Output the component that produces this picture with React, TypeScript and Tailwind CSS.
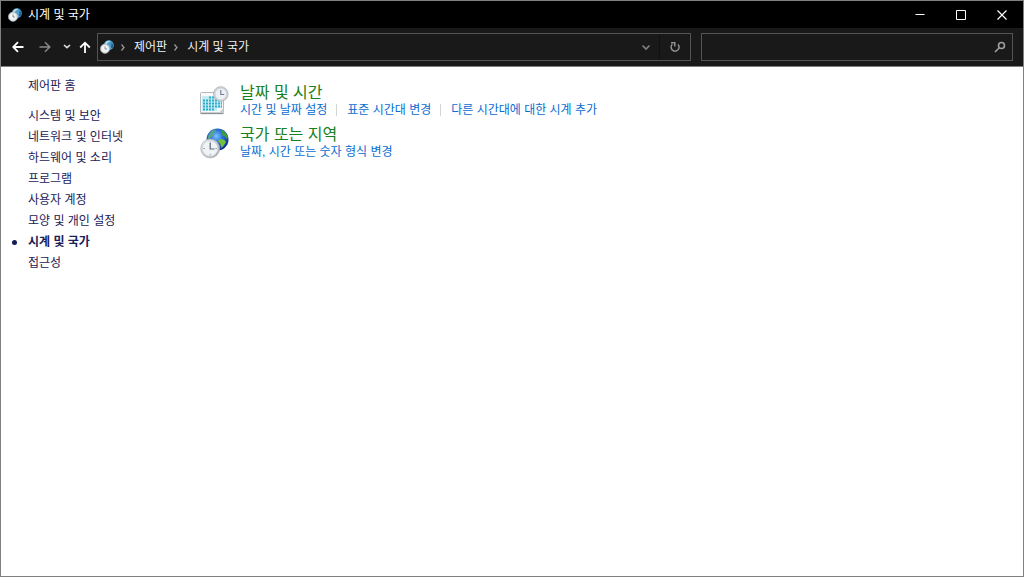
import React from 'react';

const categories = [
  '시스템 및 보안',
  '네트워크 및 인터넷',
  '하드웨어 및 소리',
  '프로그램',
  '사용자 계정',
  '모양 및 개인 설정',
  '시계 및 국가',
  '접근성',
];
const current = '시계 및 국가';

function ClockGlobeIcon({ id, className }: { id: string; className: string }) {
  return (
    <svg viewBox="0 0 30 31" className={className} aria-hidden="true">
      <defs>
        <radialGradient id={`${id}-sea`} cx="0.45" cy="0.35" r="0.7">
          <stop offset="0" stopColor="#7cc6fa" />
          <stop offset="0.45" stopColor="#2468d8" />
          <stop offset="1" stopColor="#0a2080" />
        </radialGradient>
        <linearGradient id={`${id}-rim`} x1="0" y1="0" x2="1" y2="1">
          <stop offset="0" stopColor="#eceef0" />
          <stop offset="1" stopColor="#a5aaaf" />
        </linearGradient>
      </defs>
      <circle cx="17.500" cy="11.500" r="11" fill={`url(#${id}-sea)`} />
      <path d="M8 8C9.500 4 12 2 15 1.200L16 3L13.500 5L13 8L10.500 9.500L9.500 12L7.500 12Z" fill="#5fae7c" opacity="0.8" />
      <path d="M20 1.500C24 2.500 27 5.500 28 9.500L26.500 11L25 8.500L22.500 7.500L22 4.500Z" fill="#3f9f3a" />
      <path d="M19.500 11L24 11.500L26 14L23.500 18L21 20L20.500 16L18 13.500Z" fill="#74c03a" />
      <circle cx="10.200" cy="20.500" r="9.500" fill={`url(#${id}-rim)`} stroke="#a9aeb3" strokeWidth="0.6" />
      <circle cx="10.200" cy="20.500" r="7.700" fill="#f1f4f7" stroke="#cdd2d6" strokeWidth="0.6" />
      <path d="M10.200 13.700v1.600M10.200 25.700v1.600M3.400 20.500h1.600M15.400 20.500h1.600" stroke="#9199a2" strokeWidth="0.9" />
      <path d="M10.200 15V21H14.500" fill="none" stroke="#59677a" strokeWidth="1.200" />
    </svg>
  );
}

function SmallClockIcon() {
  return (
    <svg viewBox="0 0 14 14" className="size-3.5 shrink-0" aria-hidden="true">
      <circle cx="8.800" cy="5.200" r="5" fill="#4e9dca" />
      <path d="M5 3C6.500 1 8.500 .5 10.500 1L8 2.500L6 5Z" fill="#b9e0ee" />
      <path d="M11.500 2.500C13.500 4 13.800 6.500 12.500 8.200L11 8Z" fill="#23618f" />
      <circle cx="5" cy="8.800" r="4.700" fill="#dce0e2" stroke="#a9b0b5" strokeWidth="0.5" />
      <circle cx="5" cy="8.800" r="3.200" fill="#f1f3f4" />
      <path d="M5 6.500V9H7" fill="none" stroke="#7d8790" strokeWidth="0.9" />
    </svg>
  );
}

function CalendarClockIcon() {
  return (
    <svg viewBox="0 0 30 30" className="h-[30px] w-[30px] shrink-0" aria-hidden="true">
      <rect x="0.500" y="6.500" width="23" height="20.500" rx="1" fill="#f7f9fa" stroke="#b3b9be" />
      <path d="M0.500 27.500H23.500" stroke="#8c9196" strokeWidth="1.300" />
      <path d="M2 10H22V22H17V25H2Z" fill="#c4eaf2" />
      <path
        d="M9 11.500H22M3 14.500H22M3 17.500H22M3 20.500H22M3 23.500H14"
        stroke="#2fabcb"
        strokeWidth="2"
        strokeDasharray="2 1"
      />
      <path d="M18.500 27L23.500 22V27Z" fill="#c8cdd1" />
      <circle cx="20.800" cy="8" r="7.300" fill="#d3d6d9" stroke="#a4a9ae" strokeWidth="0.7" />
      <circle cx="20.800" cy="8" r="5.700" fill="#eef2f6" stroke="#c2c8ce" strokeWidth="0.5" />
      <path d="M20.800 4V8.500H24.300" fill="none" stroke="#6c7b91" strokeWidth="1.100" />
    </svg>
  );
}

function Glyph({ d, className, width = 1.5 }: { d: string; className: string; width?: number }) {
  return (
    <svg viewBox="0 0 12 12" className={`size-3 shrink-0 ${className}`} fill="none" stroke="currentColor" strokeWidth={width} aria-hidden="true">
      <path d={d} />
    </svg>
  );
}

function TaskGroup({ icon, title, links }: { icon: React.ReactNode; title: string; links: string[] }) {
  return (
    <section className="flex items-start gap-2.5">
      <div className="pt-0.5">{icon}</div>
      <div>
        <h2 className="text-[16px] leading-[18px] text-[#188022]">
          <a href="#">{title}</a>
        </h2>
        <ul className="flex flex-wrap items-center text-[12px] leading-4 text-[#0a6cd0]">
          {links.map((link, i) => (
            <li key={link} className="flex items-center">
              {i > 0 && <span className="mr-2.5 ml-[9px] h-3 w-px bg-[#d4d4d4]" />}
              <a href="#">{link}</a>
            </li>
          ))}
        </ul>
      </div>
    </section>
  );
}

export default function App() {
  return (
    <div className="flex min-h-screen flex-col border border-[#808080] bg-white font-['Liberation_Sans','Noto_Sans_CJK_KR',sans-serif] text-[12px]">
      <header className="flex h-[27px] items-center bg-black pl-[7px] text-white">
        <SmallClockIcon />
        <h1 className="ml-1.5 flex-1 leading-4">{current}</h1>
        <button aria-label="최소화" className="flex h-full w-[41px] items-center justify-center">
          <Glyph d="M1.500 5.500H10.500" width={1} className="text-white" />
        </button>
        <button aria-label="최대화" className="flex h-full w-[41px] items-center justify-center">
          <Glyph d="M1.500 1.500H10.500V10.500H1.500Z" width={1} className="text-white" />
        </button>
        <button aria-label="닫기" className="flex h-full w-[42px] items-center justify-center">
          <Glyph d="M1.500 1.500L10.500 10.500M10.500 1.500L1.500 10.500" width={1.2} className="text-white" />
        </button>
      </header>

      <div className="flex h-[39px] items-center gap-2.5 border-b border-[#808080] bg-[#191919] pr-2.5 pb-px">
        <div className="flex min-w-0 flex-1 items-center">
          <nav aria-label="탐색" className="flex w-24 shrink-0 items-center pl-[11px] text-white">
            <button aria-label="뒤로">
              <Glyph d="M11.500 6H1.500M6 1.200L1.200 6L6 10.800" width={1.8} className="text-white" />
            </button>
            <button aria-label="앞으로" className="ml-[15px]">
              <Glyph d="M.5 6H10.500M6 1.200L10.800 6L6 10.800" width={1.5} className="text-[#888888]" />
            </button>
            <button aria-label="최근 위치" className="ml-2.5">
              <Glyph d="M3 4L6 6.700L9 4" width={1.6} className="text-[#dddddd]" />
            </button>
            <button aria-label="위로" className="ml-1.5">
              <Glyph d="M6 12V2M1.200 6.500L6 1.700L10.800 6.500" width={1.8} className="text-white" />
            </button>
          </nav>
          <div className="flex h-7 min-w-0 flex-1 items-center border border-[#535353] pl-0.5 text-[#f0f0f0]">
            <SmallClockIcon />
            <Glyph d="M4.500 3.500L7 6.500L4.500 9.500" width={1.3} className="ml-[3px] text-[#999999]" />
            <a href="#" className="ml-[5px] leading-4">제어판</a>
            <Glyph d="M4.500 3.500L7 6.500L4.500 9.500" width={1.3} className="ml-[3px] text-[#999999]" />
            <a href="#" className="ml-[5px] leading-4">{current}</a>
            <button aria-label="이전 위치" className="ml-auto flex h-full w-7 items-center justify-center border-r border-[#101010]">
              <Glyph d="M2.500 4.500L6 8L9.500 4.500" width={1.7} className="text-[#808080]" />
            </button>
            <button aria-label="새로 고침" className="flex h-full w-[30px] items-center justify-center">
              <Glyph d="M9 3.400A4 4 0 1 1 3.400 3.200M2 1.800H5.800V5.500" width={1.5} className="text-[#909090]" />
            </button>
          </div>
        </div>
        <div className="flex h-7 w-[312px] shrink-0 items-center border border-[#535353]">
          <input type="search" aria-label="제어판 검색" className="h-full min-w-0 flex-1 bg-transparent px-2 text-white outline-none" />
          <button aria-label="검색" className="px-1.5">
            <svg viewBox="0 0 12 12" className="size-3 text-[#a0a0a0]" fill="none" stroke="currentColor" strokeWidth="1.6" aria-hidden="true">
              <circle cx="7.500" cy="4.500" r="3" />
              <path d="M5.300 6.700L1 11" />
            </svg>
          </button>
        </div>
      </div>

      <div className="flex flex-1">
        <aside className="w-[199px] shrink-0 pt-[9px] pl-[27px] leading-[21px] text-[#1a2158]">
          <a href="#">제어판 홈</a>
          <ul className="mt-[9px]">
            {categories.map((name) => (
              <li key={name} className="relative">
                {name === current && (
                  <span className="absolute top-2 -left-4 size-[5px] rounded-full bg-[#151c55]" />
                )}
                <a href="#" aria-current={name === current ? 'page' : undefined} className={name === current ? 'font-bold' : ''}>
                  {name}
                </a>
              </li>
            ))}
          </ul>
        </aside>
        <main className="flex flex-1 flex-col gap-2 pt-[17px]">
          <TaskGroup
            icon={<CalendarClockIcon />}
            title="날짜 및 시간"
            links={['시간 및 날짜 설정', '표준 시간대 변경', '다른 시간대에 대한 시계 추가']}
          />
          <TaskGroup
            icon={<ClockGlobeIcon id="region" className="h-[31px] w-[30px] shrink-0" />}
            title="국가 또는 지역"
            links={['날짜, 시간 또는 숫자 형식 변경']}
          />
        </main>
      </div>
    </div>
  );
}
